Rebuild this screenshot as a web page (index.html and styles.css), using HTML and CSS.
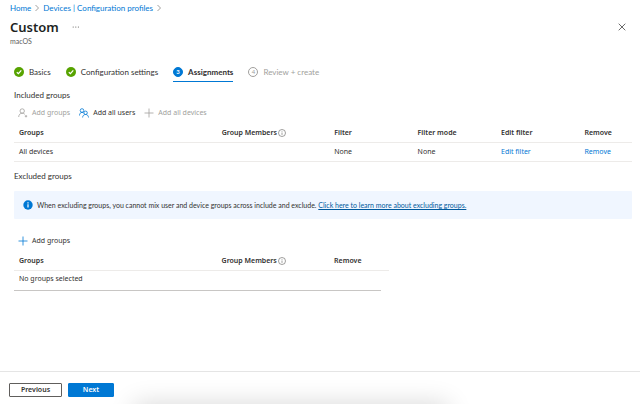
FILE: index.html
```html
<!DOCTYPE html>
<html lang="en">
<head>
<meta charset="utf-8">
<title>Custom</title>
<meta name="viewport" content="width=device-width, initial-scale=1">
<link rel="stylesheet" href="styles.css">
</head>
<body>
<div class="page">
  <header class="header">
    <nav class="breadcrumb" aria-label="Breadcrumb">
      <a href="#">Home</a>
      <svg class="chevron" viewBox="0 0 4 8"><path d="M.5 1 3.5 4 .5 7"/></svg>
      <a href="#">Devices | Configuration profiles</a>
      <svg class="chevron" viewBox="0 0 4 8"><path d="M.5 1 3.5 4 .5 7"/></svg>
    </nav>
    <div class="title-row">
      <h1>Custom</h1>
      <button class="more" type="button" aria-label="More"><svg viewBox="0 0 8 2"><circle cx="1.2" cy="1" r=".6"/><circle cx="3.8" cy="1" r=".6"/><circle cx="6.4" cy="1" r=".6"/></svg></button>
      <button class="close" type="button" aria-label="Close"><svg viewBox="0 0 8 8"><path d="m.7.7 6.6 6.6M7.300.7.7 7.300"/></svg></button>
    </div>
    <p class="subtitle">macOS</p>
  </header>

  <main class="content">
    <nav class="steps" aria-label="Steps">
      <a class="step" href="#"><svg class="check" viewBox="0 0 10 10"><circle cx="5" cy="5" r="5"/><path d="m2.800 5.200 1.600 1.500 2.900-3.300"/></svg>Basics</a>
      <a class="step" href="#"><svg class="check" viewBox="0 0 10 10"><circle cx="5" cy="5" r="5"/><path d="m2.800 5.200 1.600 1.500 2.900-3.300"/></svg>Configuration settings</a>
      <a class="step step-current" href="#" aria-current="step"><span class="number">3</span>Assignments</a>
      <a class="step step-pending" href="#"><span class="number">4</span>Review + create</a>
    </nav>

    <h2>Included groups</h2>
    <div class="toolbar">
      <button type="button" disabled><svg class="people" viewBox="0 0 10 10"><circle cx="4.200" cy="3" r="2.200"/><path d="M.7 9c.1-2.400 1.500-3.800 3.500-3.800 1.200 0 2 .4 2.600 1.100M8 7v2.400M6.800 8.200h2.400"/></svg>Add groups</button>
      <button type="button"><svg class="people" viewBox="0 0 10 10"><circle cx="3" cy="2.500" r="1.800"/><circle cx="6.600" cy="4.800" r="1.700"/><path d="M.5 7.500c0-1.900 1-3.100 2.500-3.100.7 0 1.200.2 1.600.6M3.600 9.500c.1-1.900 1.300-3 3-3s2.800 1.100 2.900 3"/></svg>Add all users</button>
      <button type="button" disabled><svg class="plus" viewBox="0 0 10 10"><path d="M5 .5v9M.5 5h9"/></svg>Add all devices</button>
    </div>
    <table class="included">
      <thead>
        <tr>
          <th class="col-groups">Groups</th>
          <th class="col-members">Group Members <svg class="info" viewBox="0 0 8 8"><circle cx="4" cy="4" r="3.500"/><path d="M4 3.500v2.400M4 2v.7"/></svg></th>
          <th class="col-filter">Filter</th>
          <th class="col-filter">Filter mode</th>
          <th class="col-filter">Edit filter</th>
          <th>Remove</th>
        </tr>
      </thead>
      <tbody>
        <tr>
          <td>All devices</td>
          <td></td>
          <td>None</td>
          <td>None</td>
          <td><a href="#">Edit filter</a></td>
          <td><a href="#">Remove</a></td>
        </tr>
      </tbody>
    </table>

    <h2 class="excluded-title">Excluded groups</h2>
    <div class="banner">
      <svg class="banner-icon" viewBox="0 0 10 10"><circle cx="5" cy="5" r="4.700"/><path d="M5 4.300v3.200M5 2.200v1.300"/></svg>
      <p>When excluding groups, you cannot mix user and device groups across include and exclude. <a href="#">Click here to learn more about excluding groups.</a></p>
    </div>
    <div class="toolbar toolbar-excluded">
      <button type="button"><svg class="plus" viewBox="0 0 10 10"><path d="M5 .5v9M.5 5h9"/></svg>Add groups</button>
    </div>
    <div class="excluded-list">
      <table class="excluded">
        <thead>
          <tr>
            <th class="col-groups">Groups</th>
            <th class="col-members">Group Members <svg class="info" viewBox="0 0 8 8"><circle cx="4" cy="4" r="3.500"/><path d="M4 3.500v2.400M4 2v.7"/></svg></th>
            <th>Remove</th>
          </tr>
        </thead>
        <tbody>
          <tr><td colspan="3">No groups selected</td></tr>
        </tbody>
      </table>
    </div>
  </main>

  <footer class="footer">
    <button class="button" type="button">Previous</button>
    <button class="button button-primary" type="button">Next</button>
  </footer>
  <div class="shade" aria-hidden="true"></div>
</div>
</body>
</html>
```
FILE: styles.css
```css
* {
  box-sizing: border-box;
}

body {
  margin: 0;
  background: #fff;
  color: #323130;
  font: 7px/10px "Noto Sans", "Open Sans", sans-serif;
}

h1, h2, p {
  margin: 0;
}

a {
  color: #0078d4;
  text-decoration: none;
}

button {
  padding: 0;
  border: 0;
  background: none;
  color: inherit;
  font: inherit;
}

svg {
  display: block;
  flex: none;
  fill: none;
  stroke: currentColor;
}

.page {
  position: relative;
  display: flex;
  flex-direction: column;
  min-height: 100vh;
  overflow: hidden;
}

.header {
  padding: 3px 14px 0 10px;
}

.breadcrumb,
.steps {
  font-family: Lato, "Noto Sans", sans-serif;
  font-size: 8px;
}

.breadcrumb {
  display: flex;
  align-items: center;
  gap: 4px;
}

.chevron {
  width: 4px;
  height: 8px;
  color: #8a8886;
  stroke-width: .8;
}

.title-row {
  display: flex;
  align-items: center;
  margin-top: 5px;
}

h1 {
  color: #201f1e;
  font-size: 13px;
  line-height: 18px;
  font-weight: 600;
}

.more {
  margin-left: 13px;
}

.more svg {
  width: 8px;
  height: 2px;
  fill: #605e5c;
  stroke: none;
}

.close {
  margin-left: auto;
}

.close svg {
  width: 8px;
  height: 8px;
  color: #444;
  stroke-width: .8;
}

.subtitle {
  color: #605e5c;
  font-family: Lato, "Noto Sans", sans-serif;
  font-size: 7px;
  line-height: 10px;
}

.content {
  flex: 1;
  padding: 16px 8px 0 14px;
}

.steps {
  display: flex;
  gap: 15px;
}

.step {
  display: flex;
  align-items: center;
  gap: 5px;
  height: 20px;
  border-bottom: 1px solid transparent;
  color: #323130;
}

.step-current {
  border-color: #0078d4;
  font-weight: 700;
}

.step-pending {
  color: #a19f9d;
}

.check {
  width: 10px;
  height: 10px;
}

.check circle {
  fill: #57a300;
  stroke: none;
}

.check path {
  stroke: #fff;
  stroke-width: 1.2;
}

.number {
  width: 10px;
  height: 10px;
  border: 1px solid #a19f9d;
  border-radius: 50%;
  font-size: 6px;
  line-height: 8px;
  text-align: center;
}

.step-current .number {
  border-color: #0078d4;
  background: #0078d4;
  color: #fff;
}

h2 {
  margin-top: 8px;
  font-family: Lato, "Noto Sans", sans-serif;
  font-size: 8px;
  line-height: 10px;
  font-weight: 400;
}

.toolbar {
  display: flex;
  gap: 9px;
  margin-top: 8px;
  padding-left: 4px;
}

.toolbar button {
  display: flex;
  align-items: center;
  gap: 4px;
  height: 10px;
}

.toolbar svg {
  width: 10px;
  height: 10px;
  color: #0078d4;
  stroke-width: .8;
}

.toolbar button:disabled,
.toolbar button:disabled svg {
  color: #a19f9d;
}

table {
  width: 100%;
  border-collapse: collapse;
  table-layout: fixed;
}

th, td {
  padding: 4px 0 4px 5px;
  border-bottom: 1px solid #edebe9;
  text-align: left;
  font-weight: 400;
}

th {
  padding-top: 5px;
  color: #323130;
  font-weight: 600;
  white-space: nowrap;
}

.included {
  margin-top: 5px;
}

.included .col-groups {
  width: 32.8%;
}

.included .col-members {
  width: 18.2%;
}

.col-filter {
  width: 13.5%;
}

.info {
  display: inline-block;
  width: 8px;
  height: 8px;
  margin-left: -1px;
  color: #605e5c;
  stroke-width: .6;
  vertical-align: middle;
}

.excluded-title {
  margin-top: 9px;
}

.banner {
  display: flex;
  align-items: center;
  gap: 4px;
  min-height: 28px;
  margin-top: 10px;
  padding: 4px 9px;
  border-radius: 1px;
  background: #f0f6ff;
  font-family: Lato, "Noto Sans", sans-serif;
}

.banner-icon {
  width: 10px;
  height: 10px;
}

.banner-icon circle {
  fill: #0078d4;
  stroke: none;
}

.banner-icon path {
  stroke: #fff;
  stroke-width: 1.2;
}

.banner a {
  color: #005a9e;
  text-decoration: underline;
}

.toolbar-excluded {
  margin-top: 17px;
}

.excluded-list {
  width: 59.4%;
  margin-top: 5px;
  border-bottom: 1px solid #c8c6c4;
}

.excluded {
  width: 102.2%;
}

.excluded .col-groups {
  width: 54%;
}

.excluded .col-members {
  width: 30%;
}

.excluded td {
  padding: 3px 0 6px 5px;
  border: 0;
}

.footer {
  display: flex;
  gap: 6px;
  padding: 11px 9px 7px;
  border-top: 1px solid #e5e5e5;
}

.button {
  min-width: 53px;
  height: 14px;
  border: 1px solid #605e5c;
  border-radius: 1px;
  background: #fff;
  font-weight: 600;
  line-height: 12px;
}

.button-primary {
  min-width: 46px;
  border-color: #0078d4;
  background: #0078d4;
  color: #fff;
}

.shade {
  position: absolute;
  top: 100%;
  left: 21%;
  right: 30%;
  height: 30px;
  box-shadow: 0 0 26px rgba(0, 0, 0, .16);
  pointer-events: none;
}
```
